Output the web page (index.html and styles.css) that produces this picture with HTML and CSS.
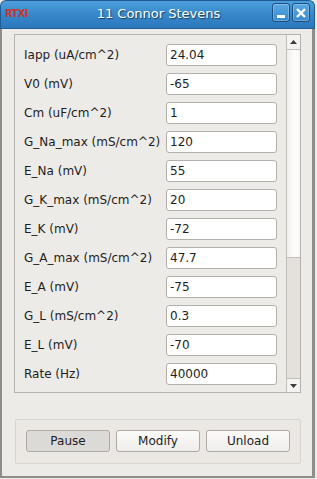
FILE: index.html
```html
<!DOCTYPE html>
<html>
<head>
<meta charset="utf-8">
<link rel="stylesheet" href="styles.css">
</head>
<body>
<div class="window">
  <div class="titlebar">
    <span class="logo">RTXI</span>
    <span class="title">11 Connor Stevens</span>
    <div class="wbtns">
      <span class="wbtn"><svg width="12" height="12" viewBox="0 0 12 12"><rect x="2" y="8" width="8" height="3" fill="#fff"/></svg></span>
      <span class="wbtn"><svg width="12" height="12" viewBox="0 0 12 12"><path d="M2 2 L10 10 M10 2 L2 10" stroke="#fff" stroke-width="2.4"/></svg></span>
    </div>
  </div>
  <div class="client">
    <div class="scrollarea">
      <div class="content">
        <div class="row"><span class="lbl">Iapp (uA/cm^2)</span><span class="field">24.04</span></div>
        <div class="row"><span class="lbl">V0 (mV)</span><span class="field">-65</span></div>
        <div class="row"><span class="lbl">Cm (uF/cm^2)</span><span class="field">1</span></div>
        <div class="row"><span class="lbl">G_Na_max (mS/cm^2)</span><span class="field">120</span></div>
        <div class="row"><span class="lbl">E_Na (mV)</span><span class="field">55</span></div>
        <div class="row"><span class="lbl">G_K_max (mS/cm^2)</span><span class="field">20</span></div>
        <div class="row"><span class="lbl">E_K (mV)</span><span class="field">-72</span></div>
        <div class="row"><span class="lbl">G_A_max (mS/cm^2)</span><span class="field">47.7</span></div>
        <div class="row"><span class="lbl">E_A (mV)</span><span class="field">-75</span></div>
        <div class="row"><span class="lbl">G_L (mS/cm^2)</span><span class="field">0.3</span></div>
        <div class="row"><span class="lbl">E_L (mV)</span><span class="field">-70</span></div>
        <div class="row"><span class="lbl">Rate (Hz)</span><span class="field">40000</span></div>
        <div class="row"><span class="lbl"></span><span class="field"></span></div>
      </div>
      <div class="vscroll">
        <div class="sbtn"><svg width="7" height="4" viewBox="0 0 7 4"><path d="M0 4 L3.5 0 L7 4 Z" fill="#3c3c3c"/></svg></div>
        <div class="handle"></div>
        <div class="track"></div>
        <div class="sbtn down"><svg width="7" height="4" viewBox="0 0 7 4"><path d="M0 0 L3.5 4 L7 0 Z" fill="#3c3c3c"/></svg></div>
      </div>
    </div>
    <div class="group">
      <span class="btn pressed">Pause</span>
      <span class="btn">Modify</span>
      <span class="btn">Unload</span>
    </div>
  </div>
</div>
</body>
</html>
```
FILE: styles.css
```css
html, body {
  margin: 0;
  padding: 0;
  background: #edebe7;
}
body {
  width: 317px;
  height: 479px;
  overflow: hidden;
  font-family: "DejaVu Sans", sans-serif;
  font-size: 12px;
  color: #1e1e1e;
}
.window {
  width: 315px;
  height: 478px;
  display: flex;
  flex-direction: column;
}
.titlebar {
  height: 29px;
  flex: none;
  box-sizing: border-box;
  border-radius: 6px 6px 0 0;
  background: linear-gradient(#4d9fdc, #3787ca 50%, #2c78bd);
  border: 1px solid #1f5a93;
  border-bottom: 1px solid #235f98;
  display: flex;
  align-items: center;
  position: relative;
}
.logo {
  font-family: "DejaVu Sans", sans-serif;
  font-weight: bold;
  font-size: 10px;
  color: #c9372c;
  margin-left: 4px;
  letter-spacing: -0.7px;
  margin-top: -3px;
}
.title {
  position: absolute;
  left: 0;
  right: 0;
  top: 5px;
  text-align: center;
  font-size: 13px;
  color: #fff;
  text-shadow: 1px 1px 1px #1a3c5e;
  padding-left: 2px;
}
.wbtns {
  margin-left: auto;
  margin-right: 4px;
  display: flex;
  gap: 2px;
  margin-top: -4px;
}
.wbtn {
  width: 18px;
  height: 19px;
  box-sizing: border-box;
  border: 1px solid #1b4f82;
  border-radius: 3px;
  background: linear-gradient(#5aa8e2, #3a8bce);
  box-shadow: inset 0 0 0 1px rgba(255,255,255,0.25);
  display: flex;
  align-items: center;
  justify-content: center;
}
.client {
  flex: 1;
  box-sizing: border-box;
  border-left: 2px solid #8f8d89;
  border-right: 3px solid #8f8d89;
  border-bottom: 2px solid #8f8d89;
  background: #edebe7;
  padding: 5px 11px 0 12px;
  display: flex;
  flex-direction: column;
}
.scrollarea {
  height: 359px;
  box-sizing: border-box;
  border: 1px solid #b6b3ae;
  display: flex;
  overflow: hidden;
}
.content {
  flex: 1;
  padding: 9px 9px 0 9px;
  display: flex;
  flex-direction: column;
  gap: 7px;
}
.row {
  height: 22px;
  flex: none;
  display: flex;
  align-items: center;
}
.lbl {
  flex: 1;
}
.field {
  width: 111px;
  height: 22px;
  box-sizing: border-box;
  border: 1px solid #b3b0ab;
  border-radius: 3px;
  background: #fff;
  padding-left: 3px;
  line-height: 20px;
}
.vscroll {
  width: 14px;
  flex: none;
  box-sizing: border-box;
  border-left: 1px solid #c2bfba;
  display: flex;
  flex-direction: column;
}
.sbtn {
  height: 15px;
  flex: none;
  box-sizing: border-box;
  border-bottom: 1px solid #c2bfba;
  background: #f4f3f1;
  display: flex;
  align-items: center;
  justify-content: center;
}
.sbtn.down {
  border-bottom: none;
  border-top: 1px solid #c2bfba;
  height: 14px;
}
.handle {
  height: 208px;
  flex: none;
  box-sizing: border-box;
  border-bottom: 1px solid #c2bfba;
  background: linear-gradient(90deg, #f0efed, #fdfdfd 60%, #f6f5f4);
}
.track {
  flex: 1;
  background: #e4e1dd;
}
.group {
  margin-top: 26px;
  height: 45px;
  box-sizing: border-box;
  border: 1px solid #d8d5d0;
  border-radius: 2px;
  background: #ebe8e4;
  margin-left: 1px;
  padding: 10px 0 0 10px;
  display: flex;
  gap: 6px;
}
.btn {
  width: 84px;
  height: 22px;
  box-sizing: border-box;
  border: 1px solid #aeaba6;
  border-radius: 3px;
  background: linear-gradient(#fbfbfa, #efedea);
  display: flex;
  align-items: center;
  justify-content: center;
}
.btn.pressed {
  background: #dcdad6;
}
```
